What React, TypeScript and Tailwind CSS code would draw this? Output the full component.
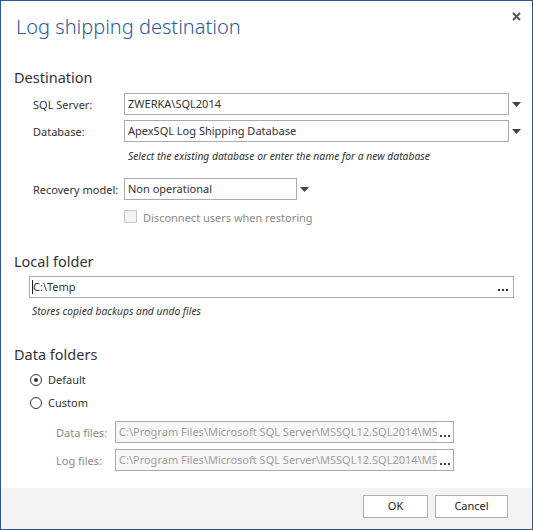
import React from "react";

const font = { fontFamily: '"Segoe UI", "Noto Sans", "Open Sans", sans-serif' };

function Arrow() {
  return (
    <svg width="9" height="5" viewBox="0 0 9 5" className="shrink-0">
      <path d="M0 0 H9 L4.5 5 Z" fill="#444" />
    </svg>
  );
}

function Ellipsis({ color = "#333" }: { color?: string }) {
  return (
    <svg width="10" height="2" viewBox="0 0 10 2">
      <rect x="0" y="0" width="2" height="2" fill={color} />
      <rect x="4" y="0" width="2" height="2" fill={color} />
      <rect x="8" y="0" width="2" height="2" fill={color} />
    </svg>
  );
}

export default function App() {
  return (
    <div
      className="w-[533px] h-[530px] border border-[#2b579a] bg-white flex flex-col relative text-[#333] overflow-hidden"
      style={font}
    >
      <button className="absolute right-[10px] top-[8px] w-[12px] h-[14px] flex items-center justify-center">
        <svg width="9" height="9" viewBox="0 0 9 9">
          <path d="M1 1 L8 8 M8 1 L1 8" stroke="#555" strokeWidth="2" />
        </svg>
      </button>

      <div className="flex-1 flex flex-col">
        <div className="pl-[15px] pt-[12px] text-[20px] leading-[28px] text-[#2b5aa0] font-light">
          Log shipping destination
        </div>

        <div className="pl-[13px] mt-[25px] text-[14.5px] leading-[22px]">Destination</div>

        <div className="flex flex-col mt-[5px] gap-[5px]">
          <div className="flex items-center h-[22px]">
            <div className="w-[123px] pl-[32px] text-[11px] leading-[16px] pt-[2px] whitespace-nowrap">SQL Server:</div>
            <div className="w-[385px] h-[22px] border border-[#ababab] flex items-center pl-[3px] text-[11px]">
              ZWERKA\SQL2014
            </div>
            <div className="ml-[3px]"><Arrow /></div>
          </div>
          <div className="flex items-center h-[22px]">
            <div className="w-[123px] pl-[32px] text-[11px] leading-[16px] pt-[2px] whitespace-nowrap">Database:</div>
            <div className="w-[385px] h-[22px] border border-[#ababab] flex items-center pl-[3px] text-[11px]">
              ApexSQL Log Shipping Database
            </div>
            <div className="ml-[3px]"><Arrow /></div>
          </div>
        </div>

        <div className="pl-[127px] mt-[6px] text-[10.3px] leading-[16px] italic">
          Select the existing database or enter the name for a new database
        </div>

        <div className="flex items-center h-[22px] mt-[14px]">
          <div className="w-[123px] pl-[32px] text-[11px] leading-[16px] pt-[2px] whitespace-nowrap">Recovery model:</div>
          <div className="w-[173px] h-[22px] border border-[#ababab] flex items-center pl-[3px] text-[11px]">
            Non operational
          </div>
          <div className="ml-[3px]"><Arrow /></div>
        </div>

        <div className="flex items-center h-[16px] mt-[8px] pl-[123px]">
          <div className="w-[13px] h-[13px] border border-[#c8c8c8] bg-[#f4f4f4]" />
          <div className="ml-[6px] text-[11px] leading-[16px] text-[#8a8a8a] pt-[3px]">
            Disconnect users when restoring
          </div>
        </div>

        <div className="pl-[13px] mt-[26px] text-[14.5px] leading-[22px]">Local folder</div>

        <div className="ml-[28px] mt-[4px] w-[485px] h-[22px] border border-[#ababab] flex items-center text-[11px]">
          <div className="w-px h-[14px] bg-[#222] ml-[2px]" />
          <div className="flex-1">C:\Temp</div>
          <div className="mr-[5px] mt-[6px]"><Ellipsis /></div>
        </div>

        <div className="pl-[31px] mt-[5px] text-[10.3px] leading-[16px] italic">
          Stores copied backups and undo files
        </div>

        <div className="pl-[13px] mt-[24px] text-[14.5px] leading-[22px]">Data folders</div>

        <div className="flex flex-col gap-[7px] mt-[7px] pl-[29px]">
          <div className="flex items-center h-[16px]">
            <div className="w-[12px] h-[12px] rounded-full border border-[#333] flex items-center justify-center">
              <div className="w-[4px] h-[4px] rounded-full bg-[#333]" />
            </div>
            <div className="ml-[6px] text-[11px] leading-[16px]">Default</div>
          </div>
          <div className="flex items-center h-[16px]">
            <div className="w-[12px] h-[12px] rounded-full border border-[#333]" />
            <div className="ml-[6px] text-[11px] leading-[16px]">Custom</div>
          </div>
        </div>

        <div className="flex flex-col gap-[6px] mt-[10px]">
          {["Data files:", "Log files:"].map((l) => (
            <div key={l} className="flex items-center h-[22px]">
              <div className="w-[114px] pl-[55px] text-[11px] leading-[16px] text-[#8a8a8a] pt-[2px] whitespace-nowrap">{l}</div>
              <div className="w-[339px] h-[22px] border border-[#ababab] flex items-stretch text-[11px] text-[#a0a0a0]">
                <div className="w-[321px] bg-[#f7f7f7] pl-[3px] flex items-center overflow-hidden whitespace-nowrap">
                  C:\Program Files\Microsoft SQL Server\MSSQL12.SQL2014\MSSQL\DATA
                </div>
                <div className="flex-1 flex items-center justify-center pt-[7px]">
                  <Ellipsis color="#444" />
                </div>
              </div>
            </div>
          ))}
        </div>
      </div>

      <div className="h-[41px] bg-[#f3f3f3] flex items-start justify-end gap-[7px] pr-[24px] pt-[7px]">
        <button className="w-[65px] h-[23px] border border-[#adadad] bg-white text-[11px] text-[#222]">OK</button>
        <button className="w-[73px] h-[23px] border border-[#adadad] bg-white text-[11px] text-[#222]">Cancel</button>
      </div>
    </div>
  );
}
